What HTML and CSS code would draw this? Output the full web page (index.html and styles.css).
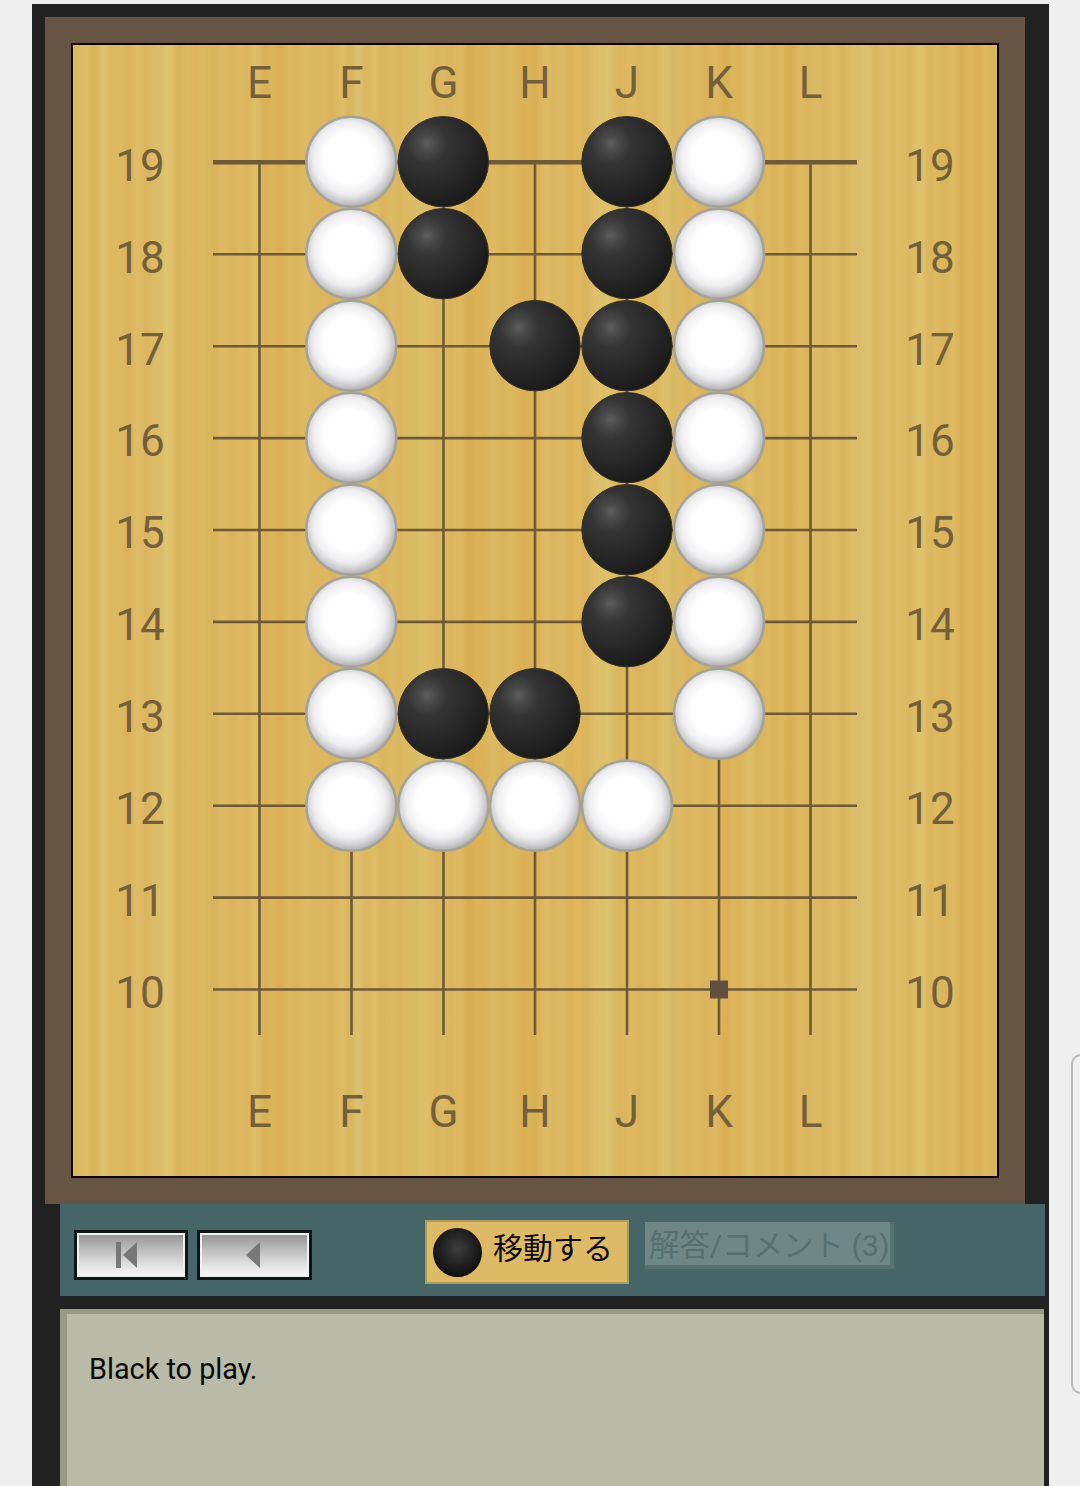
FILE: index.html
```html
<!DOCTYPE html>
<html lang="ja">
<head>
<meta charset="utf-8">
<title>Go problem</title>
<link rel="stylesheet" href="styles.css">
</head>
<body>
<main class="frame">
  <section class="board-panel">
    <div class="board">
      <svg class="goban" viewBox="73 45 924 1131" width="924" height="1131">
        <defs>
          <radialGradient id="bg" cx="0.32" cy="0.3" r="0.8">
            <stop offset="0" stop-color="#5e5e5e"/>
            <stop offset="0.1" stop-color="#4b4b4b"/>
            <stop offset="0.28" stop-color="#343434"/>
            <stop offset="0.6" stop-color="#272727"/>
            <stop offset="0.9" stop-color="#1b1b1b"/>
            <stop offset="1" stop-color="#141414"/>
          </radialGradient>
          <radialGradient id="wg" cx="0.48" cy="0.46" r="0.53">
            <stop offset="0" stop-color="#fff"/>
            <stop offset="0.52" stop-color="#fff"/>
            <stop offset="0.76" stop-color="#eeeef0"/>
            <stop offset="0.9" stop-color="#cfcfd2"/>
            <stop offset="1" stop-color="#b5b5b5"/>
          </radialGradient>
          <circle id="b" r="45.2" fill="url(#bg)" stroke="#3b3222" stroke-width="1"/>
          <circle id="w" r="45" fill="url(#wg)" stroke="#a5a395" stroke-width="2.5"/>
        </defs>
        <g class="lines">
          <path class="edge" d="M213 162.2H857"/>
          <path d="M213 254.3H857M213 346.2H857M213 438.1H857M213 530H857M213 621.9H857M213 713.8H857M213 805.7H857M213 897.6H857M213 989.5H857"/>
          <path d="M259.5 162V1035M351.5 162V1035M443.5 162V1035M535 162V1035M627 162V1035M719 162V1035M810.5 162V1035"/>
        </g>
        <rect class="star" x="710" y="980.5" width="18" height="18"/>
        <g class="labels">
          <text x="259.5" y="98">E</text><text x="351.5" y="98">F</text><text x="443.5" y="98">G</text><text x="535" y="98">H</text><text x="627" y="98">J</text><text x="719" y="98">K</text><text x="810.5" y="98">L</text>
          <text x="259.5" y="1127">E</text><text x="351.5" y="1127">F</text><text x="443.5" y="1127">G</text><text x="535" y="1127">H</text><text x="627" y="1127">J</text><text x="719" y="1127">K</text><text x="810.5" y="1127">L</text>
          <text x="140" y="181">19</text><text x="140" y="273">18</text><text x="140" y="365">17</text><text x="140" y="456">16</text><text x="140" y="548">15</text><text x="140" y="640">14</text><text x="140" y="732">13</text><text x="140" y="824">12</text><text x="140" y="916">11</text><text x="140" y="1008">10</text>
          <text x="930" y="181">19</text><text x="930" y="273">18</text><text x="930" y="365">17</text><text x="930" y="456">16</text><text x="930" y="548">15</text><text x="930" y="640">14</text><text x="930" y="732">13</text><text x="930" y="824">12</text><text x="930" y="916">11</text><text x="930" y="1008">10</text>
        </g>
        <g>
          <use href="#w" x="351.3" y="161.7"/><use href="#w" x="351.3" y="253.7"/><use href="#w" x="351.3" y="345.7"/><use href="#w" x="351.3" y="437.7"/><use href="#w" x="351.3" y="529.7"/><use href="#w" x="351.3" y="621.7"/><use href="#w" x="351.3" y="713.7"/><use href="#w" x="351.3" y="805.7"/>
          <use href="#w" x="443.3" y="805.7"/><use href="#w" x="535" y="805.7"/><use href="#w" x="627" y="805.7"/>
          <use href="#w" x="719" y="161.7"/><use href="#w" x="719" y="253.7"/><use href="#w" x="719" y="345.7"/><use href="#w" x="719" y="437.7"/><use href="#w" x="719" y="529.7"/><use href="#w" x="719" y="621.7"/><use href="#w" x="719" y="713.7"/>
          <use href="#b" x="443.3" y="161.7"/><use href="#b" x="443.3" y="253.7"/>
          <use href="#b" x="627" y="161.7"/><use href="#b" x="627" y="253.7"/><use href="#b" x="535" y="345.7"/><use href="#b" x="627" y="345.7"/><use href="#b" x="627" y="437.7"/><use href="#b" x="627" y="529.7"/><use href="#b" x="627" y="621.7"/>
          <use href="#b" x="443.3" y="713.7"/><use href="#b" x="535" y="713.7"/>
        </g>
      </svg>
    </div>
  </section>
  <section class="controls">
    <div class="nav">
      <button class="nav-btn nav-first" type="button" aria-label="最初へ">
        <svg width="22" height="28" viewBox="0 0 22 28"><rect x="0" y="1" width="5" height="26" fill="#787878"/><path d="M7 14L21 1V27Z" fill="#787878"/></svg>
      </button>
      <button class="nav-btn nav-prev" type="button" aria-label="戻る">
        <svg width="16" height="28" viewBox="0 0 16 28"><path d="M1 14L15 1V27Z" fill="#787878"/></svg>
      </button>
    </div>
    <div class="move-box">
      <span class="mini-stone"></span>
      <span class="move-text">移動する</span>
    </div>
    <div class="answer-btn">解答/コメント (3)</div>
  </section>
  <section class="comment">
    <p class="comment-text">Black to play.</p>
  </section>
</main>
<div class="scroll-tab"></div>
</body>
</html>
```
FILE: styles.css
```css
* { box-sizing: border-box; }
html, body { margin: 0; height: 1486px; overflow: hidden; }
body {
  background: #eeeeee;
  font-family: Roboto, "Noto Sans CJK JP", sans-serif;
  position: relative;
}
.frame {
  margin: 4px 31px 0 32px;
  height: 1482px;
  background: #212121;
  display: flex;
  flex-direction: column;
  padding: 13px 0 0 0;
}
.board-panel {
  margin: 0 24px 0 13px;
  padding: 26px;
  height: 1187px;
  background: #665444;
  flex: none;
}
.board {
  height: 1135px;
  border: 2px solid #0c0408;
  background-color: #dcb85f;
  background-image:
    repeating-linear-gradient(90deg, rgba(200,150,60,0) 0, rgba(200,150,60,.10) 4px, rgba(200,150,60,0) 9px, rgba(235,210,130,.10) 13px, rgba(200,150,60,0) 17px),
    repeating-linear-gradient(90deg, rgba(235,205,120,0) 0, rgba(235,205,120,.10) 11px, rgba(200,155,65,.08) 18px, rgba(235,205,120,0) 29px),
    linear-gradient(90deg,
    #dcb862 0, #dcb860 22px, #dcc26c 30px, #dcb962 38px, #ddb761 55px, #ddba65 82px, #dfc571 93px, #dcb962 102px, #dcb65f 120px,
    #dab960 135px, #ddb65f 150px, #ddba63 180px, #dbb055 208px, #ddb961 225px, #dcb65e 250px,
    #dcb962 276px, #dcc070 285px, #dcb960 295px, #dcb860 335px, #dcc26c 345px, #dcb962 355px, #dcb862 374px, #dbb055 402px, #dbb85f 424px,
    #dbb055 457px, #ddba65 480px, #dcb358 504px, #ddbc68 520px, #dcc46e 534px, #dcb962 544px, #dcb65e 560px,
    #dcb962 588px, #dcc26c 597px, #dcb860 607px, #dcb65e 617px, #ddb761 634px, #dbb055 652px, #dcba62 674px, #dab258 714px,
    #dcb964 747px, #dcb862 770px, #dcc070 787px, #ddba68 814px, #dcbc66 838px, #dcc26c 847px, #dcb860 858px,
    #dbb258 907px, #ddba60 924px);
}
.goban { display: block; }
.lines path { stroke: #705a36; stroke-width: 2.6; fill: none; }
.lines .edge { stroke-width: 4.4; }
.star { fill: #62503f; }
.labels text {
  fill: #745f3b;
  font-size: 44px;
  font-family: Roboto, sans-serif;
  text-anchor: middle;
}
.controls {
  margin: 0 4px 0 28px;
  height: 92px;
  background: #466566;
  flex: none;
  display: flex;
  align-items: flex-start;
  padding-left: 14px;
}
.nav { display: flex; gap: 9px; margin-top: 26px; }
.nav-btn {
  width: 114px;
  height: 50px;
  padding: 0;
  border: 3px solid #0d1517;
  outline: none;
  background: linear-gradient(180deg, #8f8f8f 0, #b4b4b4 30%, #dedede 70%, #fbfbfb 100%);
  box-shadow: inset 0 0 0 2px #f1f1f1;
  display: flex;
  align-items: center;
  justify-content: center;
}
.nav-first { padding-right: 8px; }
.nav-prev { width: 115px; padding-right: 3px; }
.move-box {
  margin: 16px 0 0 113px;
  width: 204px;
  height: 64px;
  background: #dfba66;
  border: 2px solid #a8995f;
  display: flex;
  align-items: center;
  padding-left: 6px;
  gap: 11px;
}
.mini-stone {
  width: 49px;
  height: 49px;
  border-radius: 50%;
  background: radial-gradient(circle at 50% 42%, #3f3f3f 0, #262626 35%, #111 70%, #0b0b0b 92%, #8c6f30 100%);
}
.move-text {
  font-family: "Noto Sans CJK JP", sans-serif;
  font-size: 30px;
  color: #0d0a08;
  line-height: 1;
  padding-bottom: 12px;
}
.answer-btn {
  margin: 18px 0 0 16px;
  width: 249px;
  height: 47px;
  background: #6f8787;
  color: #567071;
  font-size: 30.4px;
  font-family: Roboto, "Noto Sans CJK JP", sans-serif;
  line-height: 47px;
  white-space: nowrap;
  overflow: hidden;
  padding-left: 4px;
  border-right: 4px solid #5b7170;
  border-bottom: 4px solid #5b7170;
}
.comment {
  margin: 13px 5px 0 28px;
  flex: 1;
  background: #b9baa7;
  border-top: 5px solid #989a86;
  border-left: 7px solid #989a86;
  padding: 38px 0 0 22px;
}
.comment-text {
  margin: 0;
  font-size: 28.8px;
  line-height: 34px;
  color: #0a0a0a;
}
.scroll-tab {
  position: absolute;
  left: 1071px;
  top: 1054px;
  width: 30px;
  height: 340px;
  background: #f0f0f0;
  border: 2px solid #b9b9b9;
  border-radius: 10px;
}
```
